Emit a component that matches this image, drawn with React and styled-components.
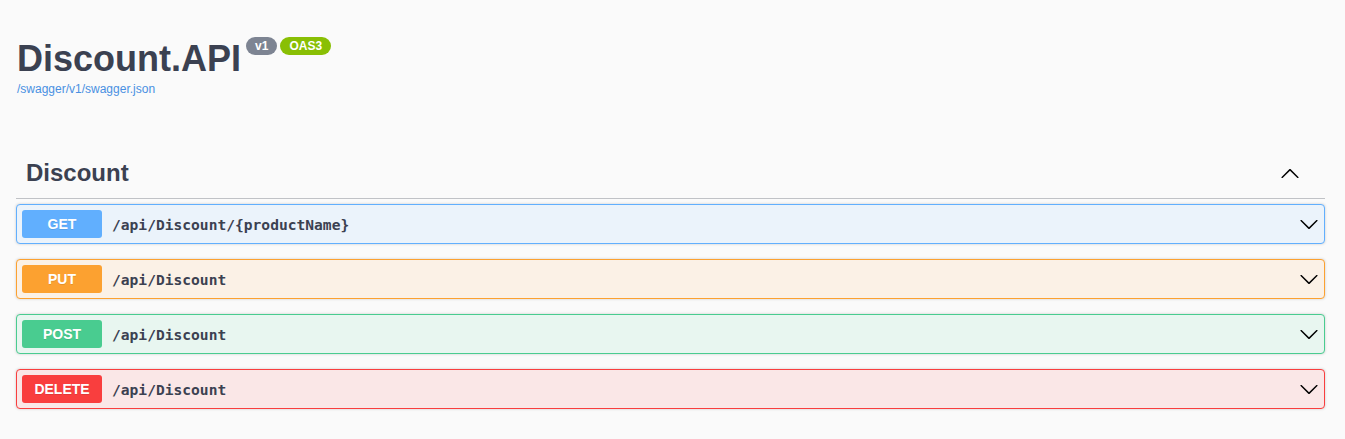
import React from "react";
import styled, { createGlobalStyle } from "styled-components";

const Global = createGlobalStyle`
  html, body { margin: 0; padding: 0; background: #fafafa; }
  body { font-family: "Liberation Sans", Arial, sans-serif; color: #3b4151; }
`;

const Wrapper = styled.div`
  padding: 38px 20px 30px 16px;
  box-sizing: border-box;
`;

const Info = styled.div`
  padding-left: 1px;
  margin-bottom: 54px;
`;

const Title = styled.h2`
  margin: 0;
  font-size: 36px;
  font-weight: 700;
  color: #3b4151;
  display: flex;
  align-items: flex-start;
  line-height: normal;
`;

const Pill = styled.span`
  display: inline-block;
  margin: -1px 0 0 ${(p) => p.$ml}px;
  padding: 2px 9px;
  border-radius: 57px;
  background: ${(p) => p.$bg};
  color: #fff;
  font-size: 12px;
  line-height: 14px;
  font-weight: 700;
`;

const Link = styled.a`
  display: block;
  font-size: 12px;
  line-height: 14px;
  margin-top: 2px;
  color: #4990e2;
  text-decoration: none;
`;

const TagHeader = styled.div`
  display: flex;
  align-items: center;
  justify-content: space-between;
  padding: 9px 25px 11px 10px;
  margin-bottom: 5px;
  border-bottom: 1px solid rgba(59, 65, 81, 0.3);
`;

const TagTitle = styled.h3`
  margin: 0;
  font-size: 24px;
  font-weight: 700;
  line-height: normal;
  color: #3b4151;
`;

const Opblock = styled.div`
  margin-bottom: 15px;
  border: 1px solid ${(p) => p.$c};
  background: ${(p) => p.$bg};
  border-radius: 4px;
  box-shadow: 0 0 3px rgba(0, 0, 0, 0.19);
`;

const Summary = styled.div`
  display: flex;
  align-items: center;
  padding: 5px;
`;

const Method = styled.span`
  min-width: 80px;
  padding: 6px 0;
  border-radius: 3px;
  background: ${(p) => p.$c};
  color: #fff;
  font-size: 14px;
  font-weight: 700;
  line-height: 16px;
  text-align: center;
  text-shadow: 0 1px 0 rgba(0, 0, 0, 0.1);
`;

const Path = styled.span`
  flex: 1;
  padding: 0 10px;
  font-family: "DejaVu Sans Mono", monospace;
  font-size: 14.6px;
  font-weight: 700;
  color: #3b4151;
`;

const Arrow = styled.svg`
  width: 20px;
  height: 20px;
  flex: none;
  fill: #000;
`;

const DOWN =
  "M17.418 6.109c.272-.268.709-.268.979 0s.271.701 0 .969l-7.908 7.83c-.27.268-.707.268-.979 0l-7.908-7.83c-.27-.268-.27-.701 0-.969.271-.268.709-.268.979 0L10 13.25l7.418-7.141z";
const UP =
  "M17.418 14.908c.272.268.709.268.979 0s.271-.701 0-.969l-7.908-7.83c-.27-.268-.707-.268-.979 0l-7.908 7.83c-.27.268-.27.701 0 .969.271.268.709.268.979 0L10 7.767l7.418 7.141z";

const ops = [
  { m: "GET", path: "/api/Discount/{productName}", c: "#61affe", bg: "#ebf3fb" },
  { m: "PUT", path: "/api/Discount", c: "#fca130", bg: "#fbf1e6" },
  { m: "POST", path: "/api/Discount", c: "#49cc90", bg: "#e8f6f0" },
  { m: "DELETE", path: "/api/Discount", c: "#f93e3e", bg: "#fae7e7" },
];

export default function App() {
  return (
    <>
      <Global />
      <Wrapper>
        <Info>
          <Title>
            Discount.API
            <Pill $bg="#7d8492" $ml={5}>v1</Pill>
            <Pill $bg="#89bf04" $ml={3}>OAS3</Pill>
          </Title>
          <Link href="#">/swagger/v1/swagger.json</Link>
        </Info>
        <TagHeader>
          <TagTitle>Discount</TagTitle>
          <Arrow viewBox="0 0 20 20"><path d={UP} /></Arrow>
        </TagHeader>
        {ops.map((o) => (
          <Opblock key={o.m} $c={o.c} $bg={o.bg}>
            <Summary>
              <Method $c={o.c}>{o.m}</Method>
              <Path>{o.path}</Path>
              <Arrow viewBox="0 0 20 20"><path d={DOWN} /></Arrow>
            </Summary>
          </Opblock>
        ))}
      </Wrapper>
    </>
  );
}
